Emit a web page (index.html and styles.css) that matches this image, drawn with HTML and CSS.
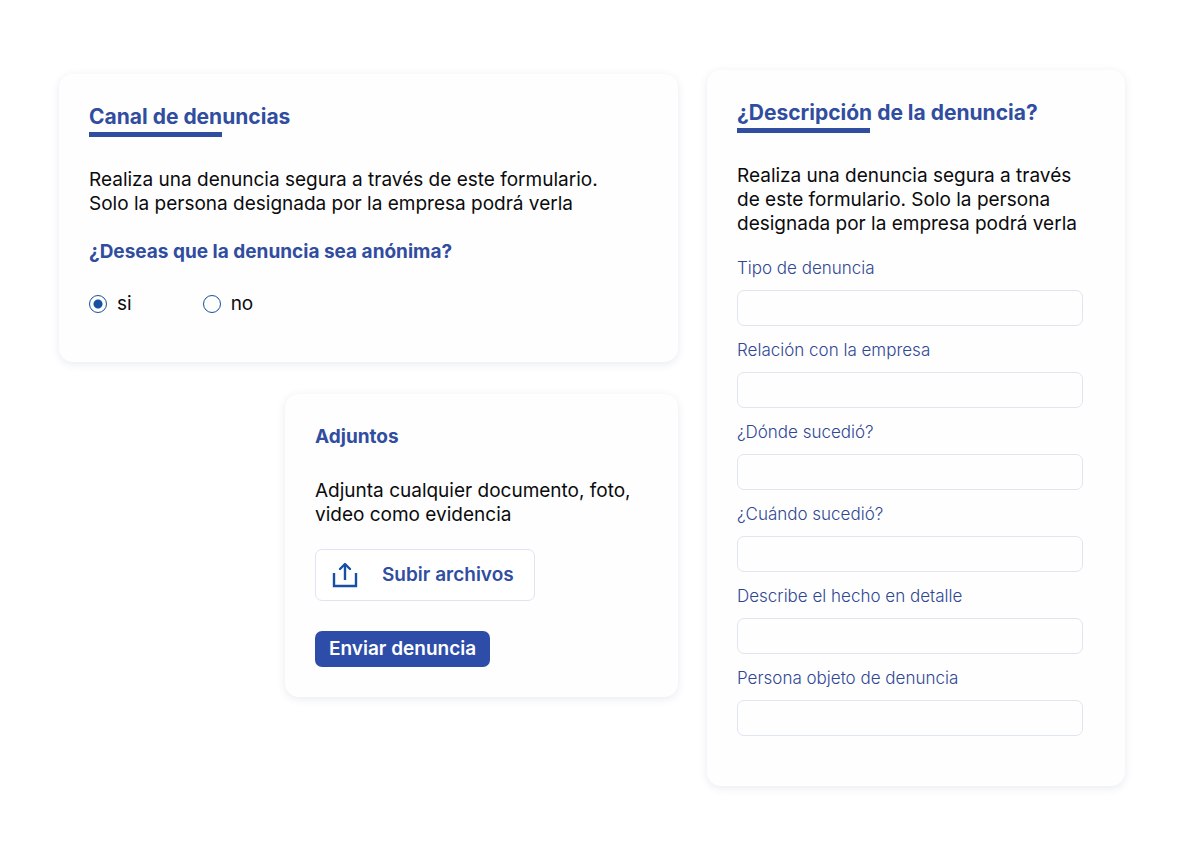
FILE: index.html
```html
<!DOCTYPE html>
<html lang="es">
<head>
<meta charset="utf-8">
<meta name="viewport" content="width=device-width, initial-scale=1">
<title>Canal de denuncias</title>
<link rel="stylesheet" href="styles.css">
</head>
<body>
<form class="page">
  <div class="column">
    <section class="card channel">
      <h1 class="title">Canal de denuncias</h1>
      <p class="text">Realiza una denuncia segura a través de este formulario.<br>Solo la persona designada por la empresa podrá verla</p>
      <fieldset class="choice">
        <legend class="question">¿Deseas que la denuncia sea anónima?</legend>
        <div class="options">
          <label class="option"><input class="radio" type="radio" name="anonima" value="si" checked>si</label>
          <label class="option"><input class="radio" type="radio" name="anonima" value="no">no</label>
        </div>
      </fieldset>
    </section>
    <section class="card attachments">
      <h2 class="subtitle">Adjuntos</h2>
      <p class="text">Adjunta cualquier documento, foto, video como evidencia</p>
      <button class="upload" type="button">
        <svg class="upload-icon" viewBox="0 0 26 26" aria-hidden="true"><path d="M2 11V24H24V11M13 18V2"/><path d="M8 7L13 2L18 7" stroke-linecap="round" stroke-linejoin="round"/></svg>
        Subir archivos
      </button>
      <button class="send" type="submit">Enviar denuncia</button>
    </section>
  </div>
  <section class="card description">
    <h2 class="title">¿Descripción de la denuncia?</h2>
    <p class="text">Realiza una denuncia segura a través de este formulario. Solo la persona designada por la empresa podrá verla</p>
    <div class="fields">
      <div class="field"><label for="tipo">Tipo de denuncia</label><input id="tipo" type="text"></div>
      <div class="field"><label for="relacion">Relación con la empresa</label><input id="relacion" type="text"></div>
      <div class="field"><label for="donde">¿Dónde sucedió?</label><input id="donde" type="text"></div>
      <div class="field"><label for="cuando">¿Cuándo sucedió?</label><input id="cuando" type="text"></div>
      <div class="field"><label for="detalle">Describe el hecho en detalle</label><input id="detalle" type="text"></div>
      <div class="field"><label for="persona">Persona objeto de denuncia</label><input id="persona" type="text"></div>
    </div>
  </section>
</form>
</body>
</html>
```

FILE: styles.css
```css
* {
  box-sizing: border-box;
}

body {
  margin: 0;
  background: #fff;
  color: #0b0b0d;
  font: 400 19px/24px Inter, "Liberation Sans", sans-serif;
  font-optical-sizing: none;
}

.page {
  display: grid;
  grid-template-columns: 619fr 418fr;
  align-items: start;
  gap: 29px;
  padding: 70px 59px;
}

.column {
  display: flex;
  flex-direction: column;
  gap: 32px;
  padding-top: 4px;
}

.card {
  padding: 31px 30px 30px;
  border-radius: 14px;
  background: #fefefe;
  box-shadow: 0 2px 8px rgba(40, 60, 120, 0.11);
}

.channel {
  padding-bottom: 46px;
}

.attachments {
  display: flex;
  flex-direction: column;
  align-items: flex-start;
  align-self: flex-end;
  width: 393px;
  max-width: 100%;
}

.description {
  padding-right: 42px;
  padding-bottom: 50px;
}

.title,
.subtitle,
.question {
  margin: 0;
  padding: 0;
  color: #304d9f;
  font-weight: 700;
}

.title {
  font-size: 21px;
}

.title::after {
  content: "";
  display: block;
  width: 133px;
  height: 5px;
  margin-top: 3px;
  background: #304d9f;
}

.subtitle,
.question {
  font-size: 19px;
}

.text {
  margin: 31px 0 0;
}

.attachments .text {
  margin-top: 30px;
}

.choice {
  margin: 24px 0 0;
  padding: 0;
  border: 0;
}

.options {
  display: flex;
  gap: 71px;
  margin-top: 28px;
}

.option {
  display: flex;
  align-items: center;
  gap: 10px;
}

.radio {
  appearance: none;
  width: 18px;
  height: 18px;
  margin: 0;
  border: 1px solid #1550a4;
  border-radius: 50%;
}

.radio:checked {
  background: radial-gradient(circle, #1550a4 4px, transparent 5px);
}

.upload,
.send {
  display: flex;
  align-items: center;
  border-radius: 7px;
  font-family: inherit;
  line-height: 24px;
}

.upload {
  gap: 24px;
  margin-top: 22px;
  padding: 13px 20px 13px 16px;
  border: 1px solid #dfe3f4;
  background: #fff;
  color: #304d9f;
  font-size: 19px;
  font-weight: 600;
}

.upload-icon {
  width: 26px;
  height: 26px;
  margin: -2px 0;
  fill: none;
  stroke: #1550a4;
  stroke-width: 2.4;
}

.send {
  margin-top: 30px;
  padding: 6px 14px;
  border: 0;
  background: #2d4da8;
  color: #fff;
  font-size: 19px;
  font-weight: 600;
}

.fields {
  display: flex;
  flex-direction: column;
  gap: 14px;
  margin-top: 22px;
}

.field {
  display: flex;
  flex-direction: column;
  gap: 12px;
}

.field label {
  color: #304894;
  font-size: 17px;
  font-weight: 300;
  line-height: 20px;
}

.field input {
  width: 100%;
  height: 36px;
  padding: 0 12px;
  border: 1px solid #dfe6f0;
  border-radius: 7px;
  background: #fefefe;
  color: inherit;
  font: inherit;
}
```
